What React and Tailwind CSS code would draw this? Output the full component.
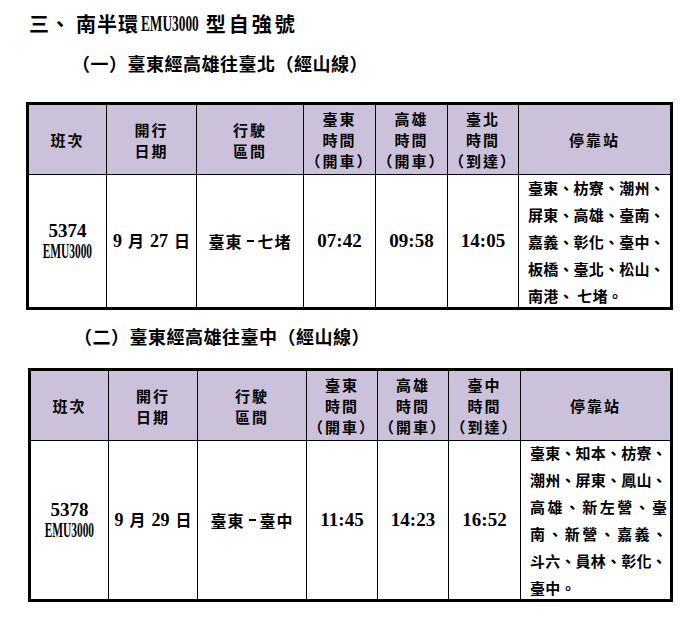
import React from "react";

const Emu = ({ title }) => (
  <span
    className={
      title
        ? "inline-block whitespace-nowrap font-['Liberation_Serif',serif] text-[23px] font-bold [transform:scaleX(0.58)] mx-[-21px] tracking-normal"
        : "inline-block whitespace-nowrap font-['Liberation_Serif',serif] text-[20px] font-bold [transform:scaleX(0.57)] mx-[-19px]"
    }
  >
    EMU3000
  </span>
);

const Num = ({ children }) => (
  <span className="font-['Liberation_Serif',serif] text-[18px] font-bold">{children}</span>
);

const HeadCell = ({ lines, first }) => (
  <div
    className={
      first
        ? "flex flex-col items-center justify-center border-b border-black bg-[#ccc1da] text-[15px] leading-[21px] tracking-[2px]"
        : "flex flex-col items-center justify-center border-b border-l border-black bg-[#ccc1da] text-[15px] leading-[21px] tracking-[2px]"
    }
  >
    {lines.map((l) => (
      <div key={l} className="whitespace-nowrap">
        {l}
      </div>
    ))}
  </div>
);

const BodyCell = ({ children, first }) => (
  <div
    className={
      first
        ? "flex flex-col items-center justify-center"
        : "flex flex-col items-center justify-center border-l border-black"
    }
  >
    {children}
  </div>
);

const Table = ({ cols, no, date, from, to, t1, t2, t3, dest, stops }) => (
  <div className={"grid border-[3px] border-black " + cols}>
    <HeadCell first lines={["班次"]} />
    <HeadCell lines={["開行", "日期"]} />
    <HeadCell lines={["行駛", "區間"]} />
    <HeadCell lines={["臺東", "時間", "（開車）"]} />
    <HeadCell lines={["高雄", "時間", "（開車）"]} />
    <HeadCell lines={[dest, "時間", "（到達）"]} />
    <HeadCell lines={["停靠站"]} />

    <BodyCell first>
      <div className="font-['Liberation_Serif',serif] text-[19px] font-bold leading-[21px]">{no}</div>
      <div className="leading-[21px]">
        <Emu />
      </div>
    </BodyCell>
    <BodyCell>
      <div className="flex items-baseline whitespace-nowrap text-[16px]">
        <Num>9</Num>
        <span className="ml-[6px]">月</span>
        <span className="ml-[6px]">
          <Num>{date}</Num>
        </span>
        <span className="ml-[6px]">日</span>
      </div>
    </BodyCell>
    <BodyCell>
      <div className="flex items-center whitespace-nowrap text-[16px] tracking-[1px]">
        <span>{from}</span>
        <span className="mx-[4px] h-[2px] w-[7px] bg-black"></span>
        <span>{to}</span>
      </div>
    </BodyCell>
    <BodyCell>
      <div className="font-['Liberation_Serif',serif] text-[19px] font-bold">{t1}</div>
    </BodyCell>
    <BodyCell>
      <div className="font-['Liberation_Serif',serif] text-[19px] font-bold">{t2}</div>
    </BodyCell>
    <BodyCell>
      <div className="font-['Liberation_Serif',serif] text-[19px] font-bold">{t3}</div>
    </BodyCell>
    <div className="flex flex-col justify-center border-l border-black pl-[9px] text-[15px] leading-[27px]">
      {stops.map(([s, j]) => (
        <div
          key={s}
          className={
            j
              ? "w-[137px] whitespace-nowrap text-justify [text-align-last:justify]"
              : "w-[137px] whitespace-nowrap tracking-[0.2px]"
          }
        >
          {s}
        </div>
      ))}
    </div>
  </div>
);

export default function App() {
  return (
    <div className="min-h-[631px] w-[698px] bg-white pt-[10px] font-['Noto_Sans_CJK_TC',sans-serif] font-bold text-black">
      <div className="flex h-[28px] items-center pl-[29px] text-[20px] leading-[28px]">
        <span className="tracking-[1px]">三、</span>
        <span className="ml-[5px] mr-[2px] tracking-[1px]">南半環</span>
        <Emu title />
        <span className="ml-[7px] tracking-[3px]">型自強號</span>
      </div>

      <div className="mt-[12px] h-[26px] pl-[72px] text-[18px] leading-[26px] tracking-[0.5px]">
        （一）臺東經高雄往臺北（經山線）
      </div>

      <div className="ml-[26px] mt-[26px] w-[647px]">
        <Table
          cols="grid-cols-[77px_90px_107px_72px_72px_71px_152px] grid-rows-[70px_132px]"
          no="5374"
          date="27"
          from="臺東"
          to="七堵"
          t1="07:42"
          t2="09:58"
          t3="14:05"
          dest="臺北"
          stops={[
            ["臺東、枋寮、潮州、"],
            ["屏東、高雄、臺南、"],
            ["嘉義、彰化、臺中、"],
            ["板橋、臺北、松山、"],
            ["南港、 七堵。"],
          ]}
        />
      </div>

      <div className="mt-[13px] h-[26px] pl-[74px] text-[18px] leading-[26px] tracking-[0.5px]">
        （二）臺東經高雄往臺中（經山線）
      </div>

      <div className="ml-[28px] mt-[19px] w-[645px]">
        <Table
          cols="grid-cols-[77px_89px_109px_71px_71px_72px_150px] grid-rows-[70px_158px]"
          no="5378"
          date="29"
          from="臺東"
          to="臺中"
          t1="11:45"
          t2="14:23"
          t3="16:52"
          dest="臺中"
          stops={[
            ["臺東、知本、枋寮、"],
            ["潮州、屏東、鳳山、"],
            ["高雄、新左營、臺", true],
            ["南、新營、嘉義、", true],
            ["斗六、員林、彰化、"],
            ["臺中。"],
          ]}
        />
      </div>
    </div>
  );
}
